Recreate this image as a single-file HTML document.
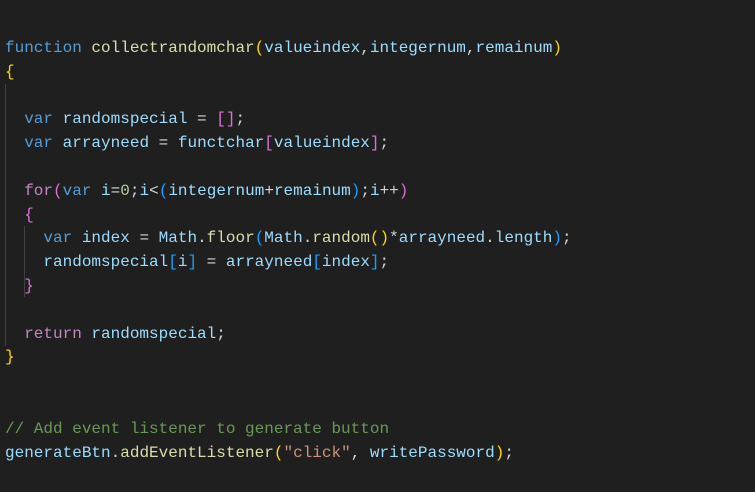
<!DOCTYPE html>
<html><head><meta charset="utf-8"><style>
body{margin:0;background:#1f1f1f;width:755px;height:492px;overflow:hidden;position:relative}
pre{margin:0;position:absolute;left:5px;top:37px;font-family:"Liberation Mono",monospace;font-size:16px;line-height:23.8px;color:#d4d4d4}
.k{color:#569cd6}.c{color:#c586c0}.f{color:#dcdcaa}.v{color:#9cdcfe}.n{color:#b5cea8}.s{color:#ce9178}.m{color:#6a9955}
.g{color:#ffd700}.o{color:#da70d6}.b{color:#179fff}
.guide{position:absolute;width:1px;background:#404040}
</style></head><body>
<div class="guide" style="left:5px;top:84px;height:262px"></div>
<div class="guide" style="left:24px;top:226px;height:71px"></div>
<pre><span class="k">function</span> <span class="f">collectrandomchar</span><span class="g">(</span><span class="v">valueindex</span>,<span class="v">integernum</span>,<span class="v">remainum</span><span class="g">)</span>
<span class="g">{</span>

  <span class="k">var</span> <span class="v">randomspecial</span> = <span class="o">[]</span>;
  <span class="k">var</span> <span class="v">arrayneed</span> = <span class="v">functchar</span><span class="o">[</span><span class="v">valueindex</span><span class="o">]</span>;

  <span class="c">for</span><span class="o">(</span><span class="k">var</span> <span class="v">i</span>=<span class="n">0</span>;<span class="v">i</span>&lt;<span class="b">(</span><span class="v">integernum</span>+<span class="v">remainum</span><span class="b">)</span>;<span class="v">i</span>++<span class="o">)</span>
  <span class="o">{</span>
    <span class="k">var</span> <span class="v">index</span> = <span class="v">Math</span>.<span class="f">floor</span><span class="b">(</span><span class="v">Math</span>.<span class="f">random</span><span class="g">()</span>*<span class="v">arrayneed</span>.<span class="v">length</span><span class="b">)</span>;
    <span class="v">randomspecial</span><span class="b">[</span><span class="v">i</span><span class="b">]</span> = <span class="v">arrayneed</span><span class="b">[</span><span class="v">index</span><span class="b">]</span>;
  <span class="o">}</span>

  <span class="c">return</span> <span class="v">randomspecial</span>;
<span class="g">}</span>


<span class="m">// Add event listener to generate button</span>
<span class="v">generateBtn</span>.<span class="f">addEventListener</span><span class="g">(</span><span class="s">"click"</span>, <span class="v">writePassword</span><span class="g">)</span>;
</pre>
</body></html>
